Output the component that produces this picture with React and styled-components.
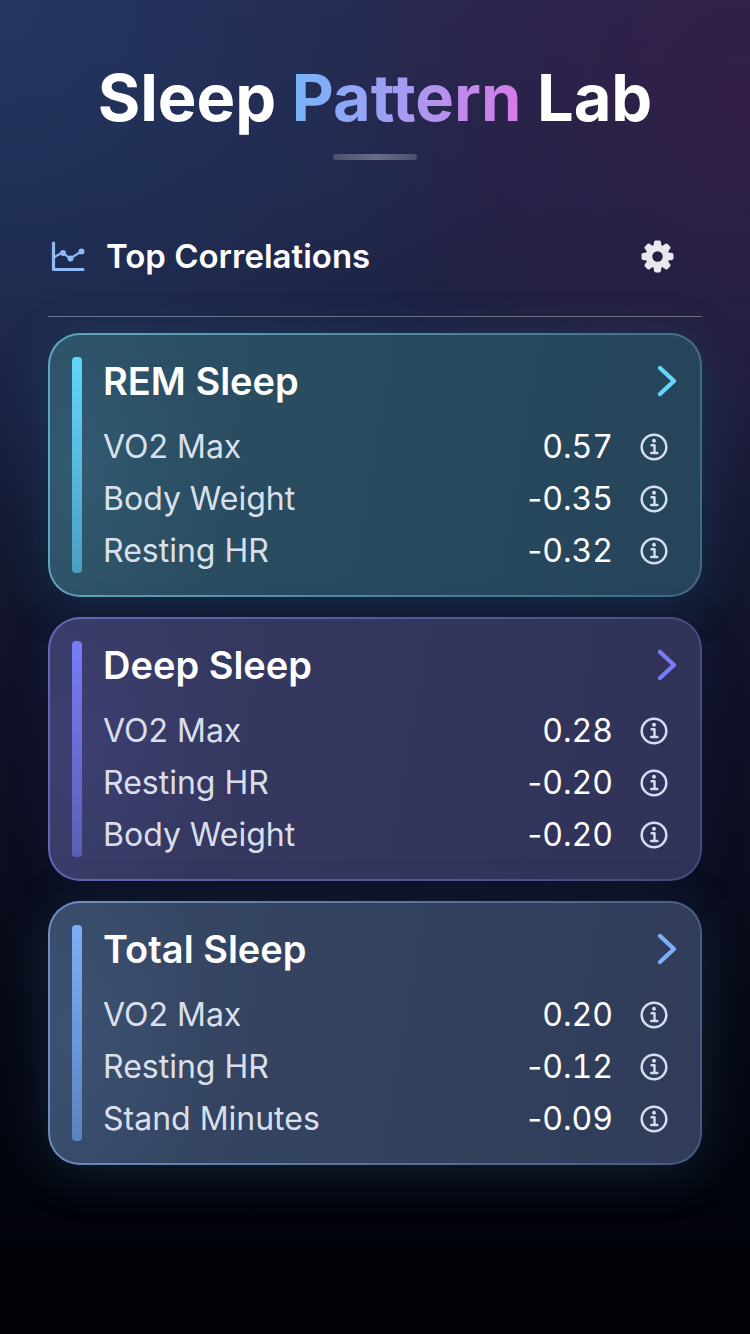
import React from 'react';
import styled, { createGlobalStyle } from 'styled-components';

const GlobalStyle = createGlobalStyle`
    * {
        box-sizing: border-box;
    }
    body {
        margin: 0;
        background: #010208;
        color: #ffffff;
        font-family: Inter, "Liberation Sans", sans-serif;
    }
`;

const Page = styled.main`
    min-height: 100vh;
    padding: 56px 48px;
    background:
        radial-gradient(ellipse 55% 32% at 100% 8%, rgba(58, 26, 66, 0.6), rgba(58, 26, 66, 0) 100%),
        radial-gradient(ellipse 70% 40% at 0% 0%, rgba(32, 62, 104, 0.7), rgba(32, 62, 104, 0) 100%),
        linear-gradient(180deg, #28264e 0%, #212549 14%, #1d2242 24%, #161a35 38%, #101329 50%, #0b0e1f 64%, #060915 78%, #02040b 91%, #010207 100%);
`;

const Hero = styled.header`
    display: flex;
    flex-direction: column;
    align-items: center;
    gap: 14px;
`;

const Title = styled.h1`
    margin: 0;
    font-size: 65px;
    font-weight: 700;
    line-height: 84px;
    text-align: center;
    white-space: nowrap;
`;

const Accent = styled.span`
    color: transparent;
    background: linear-gradient(90deg, #76b4fb, #a79bf0 50%, #d67be6);
    background-clip: text;
    -webkit-background-clip: text;
`;

const Underline = styled.div`
    width: 84px;
    height: 6px;
    border-radius: 3px;
    background: linear-gradient(90deg, #4c4f6e, #6a6c88, #4c4f6e);
`;

const SectionHeader = styled.div`
    display: flex;
    align-items: center;
    gap: 20px;
    height: 121px;
    margin-top: 36px;
    padding: 0 28px 0 2px;
    border-bottom: 1px solid rgba(255, 255, 255, 0.35);
`;

const SectionTitle = styled.h2`
    flex: 1;
    margin: 0;
    font-size: 33px;
    font-weight: 600;
    line-height: 44px;
`;

const IconButton = styled.button`
    display: flex;
    padding: 0;
    border: none;
    background: none;
    color: ${(props) => props.$color};
    cursor: pointer;
`;

const CardList = styled.section`
    display: flex;
    flex-direction: column;
    gap: 20px;
    margin-top: 16px;
`;

const Card = styled.article`
    display: flex;
    gap: 21px;
    padding: 22px;
    border: 2px solid transparent;
    border-radius: 32px;
    background:
        radial-gradient(ellipse 22% 80% at 4% 50%, ${(props) => props.$theme.glow}, transparent) padding-box,
        linear-gradient(100deg, ${(props) => props.$theme.from}, ${(props) => props.$theme.to}) padding-box,
        linear-gradient(100deg, ${(props) => props.$theme.edge}, ${(props) => props.$theme.edgeEnd}) border-box;
    box-shadow: 0 8px 48px ${(props) => props.$theme.shadow};
`;

const Bar = styled.div`
    width: 10px;
    border-radius: 4px;
    background: linear-gradient(180deg, ${(props) => props.$theme.accent}, ${(props) => props.$theme.accentEnd});
`;

const CardBody = styled.div`
    flex: 1;
`;

const CardHeader = styled.div`
    display: flex;
    align-items: center;
    justify-content: space-between;
    margin-bottom: 20px;
`;

const CardTitle = styled.h3`
    margin: 0;
    font-size: 38px;
    font-weight: 600;
    line-height: 48px;
`;

const Metrics = styled.ul`
    display: flex;
    flex-direction: column;
    gap: 8px;
    margin: 0;
    padding: 0 10px 0 0;
    list-style: none;
`;

const Metric = styled.li`
    display: flex;
    align-items: center;
    font-size: 32px;
    line-height: 44px;
`;

const MetricName = styled.span`
    flex: 1;
    color: rgba(240, 245, 255, 0.9);
`;

const MetricValue = styled.span`
    margin-right: 27px;
    font-variant-numeric: tabular-nums;
`;

const Sign = styled.span`
    font-variant-numeric: normal;
`;

const ChartIcon = () => (
    <svg width="36" height="34" viewBox="0 0 36 34" fill="none" stroke="#8fbaf6" strokeLinecap="round" strokeLinejoin="round" aria-hidden="true">
        <path d="M3.5 4v26.5H33" strokeWidth="3.2" />
        <path d="M4.5 18l8-4.5 7.5 6L31.5 12.500" strokeWidth="2.2" />
        <g fill="#8fbaf6" stroke="none">
            <circle cx="13" cy="14" r="3" />
            <circle cx="20.5" cy="19.5" r="3" />
            <circle cx="31.5" cy="12.5" r="3" />
        </g>
    </svg>
);

const GearIcon = () => (
    <svg width="33" height="33" viewBox="0 0 33 33" aria-hidden="true">
        <g fill="currentColor">
            {[0, 45, 90, 135].map((angle) => (
                <path
                    key={angle}
                    transform={`rotate(${angle} 16.5 16.5)`}
                    d="M14.8.5h3.4q1.400 0 1.700 1.400L20.600 6v21l-.7 4.100q-.3 1.400-1.700 1.400h-3.400q-1.400 0-1.700-1.400L12.400 27V6l.7-4.100q.3-1.400 1.700-1.400z"
                />
            ))}
            <circle cx="16.5" cy="16.5" r="11.8" />
        </g>
        <circle cx="16.5" cy="16.5" r="5.2" fill="#251f40" />
    </svg>
);

const ChevronIcon = () => (
    <svg width="24" height="34" viewBox="0 0 24 34" fill="none" stroke="currentColor" strokeWidth="4.4" strokeLinecap="round" strokeLinejoin="round" aria-hidden="true">
        <path d="M6 4l14 13L6 30" />
    </svg>
);

const InfoIcon = () => (
    <svg width="28" height="28" viewBox="0 0 28 28" fill="none" stroke="currentColor" strokeLinecap="round" aria-hidden="true">
        <circle cx="14" cy="14" r="12.3" strokeWidth="2.5" />
        <path d="M11.6 12.200h2.900v7.800M11.200 20h6.200" strokeWidth="2.400" strokeLinejoin="round" />
        <circle cx="14" cy="7.800" r="2" fill="currentColor" stroke="none" />
    </svg>
);

const themes = {
    rem: {
        accent: '#63d5fb',
        accentEnd: '#4a9fc0',
        glow: 'rgba(62, 108, 134, 0.35)',
        from: '#2b5064',
        to: '#26445a',
        edge: '#5fa9c0',
        edgeEnd: '#3f6a82',
        shadow: 'rgba(30, 120, 160, 0.26)',
    },
    deep: {
        accent: '#777df5',
        accentEnd: '#5b5eb4',
        glow: 'rgba(76, 76, 150, 0.3)',
        from: '#373a62',
        to: '#303258',
        edge: '#6468b4',
        edgeEnd: '#484a7c',
        shadow: 'rgba(50, 54, 140, 0.12)',
    },
    total: {
        accent: '#7ab0f7',
        accentEnd: '#5b82bd',
        glow: 'rgba(76, 104, 150, 0.3)',
        from: '#364864',
        to: '#303c59',
        edge: '#6d90c4',
        edgeEnd: '#475a7e',
        shadow: 'rgba(50, 100, 140, 0.28)',
    },
};

const correlations = [
    {
        title: 'REM Sleep',
        theme: themes.rem,
        metrics: [['VO2 Max', '0.57'], ['Body Weight', '-0.35'], ['Resting HR', '-0.32']],
    },
    {
        title: 'Deep Sleep',
        theme: themes.deep,
        metrics: [['VO2 Max', '0.28'], ['Resting HR', '-0.20'], ['Body Weight', '-0.20']],
    },
    {
        title: 'Total Sleep',
        theme: themes.total,
        metrics: [['VO2 Max', '0.20'], ['Resting HR', '-0.12'], ['Stand Minutes', '-0.09']],
    },
];

const App = () => {
    return (
        <Page>
            <GlobalStyle />
            <Hero>
                <Title>
                    Sleep <Accent>Pattern</Accent> Lab
                </Title>
                <Underline />
            </Hero>

            <SectionHeader>
                <ChartIcon />
                <SectionTitle>Top Correlations</SectionTitle>
                <IconButton $color="#eae8ef" aria-label="Settings">
                    <GearIcon />
                </IconButton>
            </SectionHeader>

            <CardList>
                {correlations.map(({ title, theme, metrics }) => (
                    <Card key={title} $theme={theme}>
                        <Bar $theme={theme} />
                        <CardBody>
                            <CardHeader>
                                <CardTitle>{title}</CardTitle>
                                <IconButton $color={theme.accent} aria-label={`Open ${title}`}>
                                    <ChevronIcon />
                                </IconButton>
                            </CardHeader>
                            <Metrics>
                                {metrics.map(([name, value]) => (
                                    <Metric key={name}>
                                        <MetricName>{name}</MetricName>
                                        <MetricValue>
                                            {value.startsWith('-') && <Sign>-</Sign>}
                                            {value.replace('-', '')}
                                        </MetricValue>
                                        <IconButton $color="#d3def0" aria-label={`About ${name}`}>
                                            <InfoIcon />
                                        </IconButton>
                                    </Metric>
                                ))}
                            </Metrics>
                        </CardBody>
                    </Card>
                ))}
            </CardList>
        </Page>
    );
};

export default App;
